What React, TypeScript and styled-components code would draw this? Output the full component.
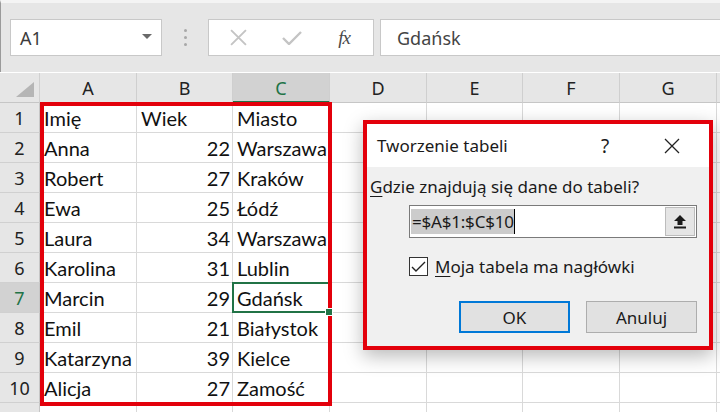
import React from "react";
import styled, { createGlobalStyle } from "styled-components";

const GlobalStyle = createGlobalStyle`
  html, body { margin: 0; padding: 0; background: #ffffff; overflow: hidden; }
  * { box-sizing: border-box; }
`;

const COLS = ["A", "B", "C", "D", "E", "F", "G", ""];
const WIDTHS = [97, 96, 97, 97, 96, 97, 97, 60];

const DATA: [string, string, string][] = [
  ["Imię", "Wiek", "Miasto"],
  ["Anna", "22", "Warszawa"],
  ["Robert", "27", "Kraków"],
  ["Ewa", "25", "Łódź"],
  ["Laura", "34", "Warszawa"],
  ["Karolina", "31", "Lublin"],
  ["Marcin", "29", "Gdańsk"],
  ["Emil", "21", "Białystok"],
  ["Katarzyna", "39", "Kielce"],
  ["Alicja", "27", "Zamość"],
  ["", "", ""],
];

const Root = styled.div`
  position: relative;
  width: 720px;
  height: 412px;
  overflow: hidden;
  background: #ffffff;
`;

const FormulaBar = styled.div`
  height: 72px;
  background: #e6e6e6;
  border-top: 3px solid #f4f4f4;
  border-left: 1px solid #9a9a9a;
  display: flex;
  align-items: flex-start;
  padding: 16px 0 0 9px;
`;

const NameBox = styled.div`
  width: 152px;
  height: 37px;
  background: #ffffff;
  border: 1px solid #c8c8c8;
  display: flex;
  align-items: center;
  justify-content: space-between;
  padding: 0 9px 0 9px;
  font-family: "Noto Sans", "Open Sans", sans-serif;
  font-size: 18px;
  color: #3c3c3c;
`;

const DropArrow = styled.span`
  width: 0;
  height: 0;
  border-left: 5px solid transparent;
  border-right: 5px solid transparent;
  border-top: 5px solid #6a6a6a;
  margin-top: -2px;
`;

const Dots = styled.div`
  width: 46px;
  height: 37px;
  display: flex;
  flex-direction: column;
  align-items: center;
  justify-content: center;
  gap: 4px;
  & > span {
    width: 3px;
    height: 3px;
    border-radius: 50%;
    background: #a8a8a8;
  }
`;

const ButtonsBox = styled.div`
  width: 166px;
  height: 37px;
  background: #ffffff;
  border: 1px solid #c8c8c8;
  display: flex;
  align-items: center;
  padding-left: 20px;
`;

const IconSlot = styled.div<{ $w: number }>`
  width: ${(p) => p.$w}px;
  display: flex;
  align-items: center;
  justify-content: center;
`;

const Fx = styled.span`
  font-family: "Liberation Serif", "DejaVu Serif", serif;
  font-style: italic;
  font-size: 19px;
  color: #4a4a4a;
  letter-spacing: -1px;
`;

const FormulaInput = styled.div`
  flex: 1;
  margin-left: 6px;
  height: 37px;
  background: #ffffff;
  border: 1px solid #c8c8c8;
  border-right: none;
  display: flex;
  align-items: center;
  padding-left: 16px;
  font-family: "Noto Sans", "Open Sans", sans-serif;
  font-size: 18px;
  color: #444444;
`;

const Sheet = styled.div`
  display: grid;
  grid-template-columns: 40px ${WIDTHS.map((w) => w + "px").join(" ")};
  grid-auto-rows: 30px;
  padding-top: 1px;
`;

const Corner = styled.div`
  background: #e6e6e6;
  border-right: 1px solid #d0d0d0;
  border-bottom: 1px solid #c6c6c6;
  display: flex;
  align-items: flex-end;
  justify-content: flex-end;
  padding: 0 5px 5px 0;
`;

const ColHeader = styled.div<{ $active?: boolean }>`
  background: ${(p) => (p.$active ? "#d2d2d2" : "#e6e6e6")};
  border-right: 1px solid #cfcfcf;
  border-bottom: ${(p) => (p.$active ? "2px solid #217346" : "1px solid #c6c6c6")};
  display: flex;
  align-items: center;
  justify-content: center;
  font-family: "Noto Sans", "Open Sans", sans-serif;
  font-size: 18px;
  color: ${(p) => (p.$active ? "#217346" : "#222222")};
  padding-top: ${(p) => (p.$active ? "1px" : "0")};
`;

const RowHeader = styled.div<{ $active?: boolean }>`
  background: ${(p) => (p.$active ? "#d2d2d2" : "#e6e6e6")};
  border-right: 1px solid #c6c6c6;
  border-bottom: 1px solid #d0d0d0;
  display: flex;
  align-items: center;
  justify-content: center;
  font-family: "Noto Sans", "Open Sans", sans-serif;
  font-size: 18px;
  color: ${(p) => (p.$active ? "#217346" : "#222222")};
`;

const Cell = styled.div<{ $align?: "left" | "right"; $selected?: boolean }>`
  position: relative;
  border-right: 1px solid #d9d9d9;
  border-bottom: 1px solid #d9d9d9;
  display: flex;
  align-items: center;
  justify-content: ${(p) => (p.$align === "right" ? "flex-end" : "flex-start")};
  padding: 0 2px 0 4px;
  font-family: Lato, "Noto Sans", sans-serif;
  font-size: 20px;
  color: #111111;
  white-space: nowrap;
  ${(p) =>
    p.$selected &&
    `
    &::after {
      content: "";
      position: absolute;
      left: -1px; top: -1px; right: -1px; bottom: -1px;
      border: 2px solid #217346;
    }
    &::before {
      content: "";
      position: absolute;
      right: -4px; bottom: -4px;
      width: 6px; height: 6px;
      background: #217346;
      border: 1px solid #ffffff;
      z-index: 2;
    }
  `}
`;

const RangeFrame = styled.div`
  position: absolute;
  left: 40px;
  top: 102px;
  width: 292px;
  height: 304px;
  border: 4px solid #e3000b;
  pointer-events: none;
`;

const Dialog = styled.div`
  position: absolute;
  left: 363px;
  top: 120px;
  width: 350px;
  height: 230px;
  border: 4px solid #e3000b;
  background: #f0f0f0;
  box-shadow: 0 6px 18px rgba(0, 0, 0, 0.28);
  display: flex;
  flex-direction: column;
  font-family: "Noto Sans", "Open Sans", sans-serif;
  color: #1a1a1a;
`;

const TitleBar = styled.div`
  height: 43px;
  background: #ffffff;
  display: flex;
  align-items: center;
  padding: 0 0 0 10px;
  font-size: 17px;
`;

const Title = styled.span`
  flex: 1;
`;

const TitleButton = styled.span<{ $w: number }>`
  width: ${(p) => p.$w}px;
  display: flex;
  align-items: center;
  justify-content: center;
  font-size: 19px;
`;

const Body = styled.div`
  flex: 1;
  display: flex;
  flex-direction: column;
  padding: 8px 12px 0 3px;
  font-size: 17px;
`;

const Prompt = styled.div`
  line-height: 24px;
`;

const Accel = styled.span`
  text-decoration: underline;
  text-underline-offset: 3px;
  text-decoration-thickness: 1px;
`;

const RefInput = styled.div`
  margin: 6px 0 0 39px;
  height: 33px;
  background: #ffffff;
  border: 1px solid #7a7a7a;
  display: flex;
  align-items: center;
  padding: 0 1px 0 1px;
`;

const RefText = styled.span`
  background: #cccccc;
  height: 25px;
  display: flex;
  align-items: center;
  padding: 0 0 0 1px;
  font-size: 17px;
  letter-spacing: -0.2px;
  border-right: 1px solid #000;
`;

const Spacer = styled.span`
  flex: 1;
`;

const CollapseButton = styled.span`
  width: 30px;
  height: 29px;
  background: #e5e5e5;
  border: 1px solid #bcbcbc;
  display: flex;
  align-items: center;
  justify-content: center;
`;

const CheckRow = styled.label`
  margin: 17px 0 0 39px;
  display: flex;
  align-items: center;
  gap: 7px;
  font-size: 17px;
`;

const CheckBox = styled.span`
  width: 19px;
  height: 19px;
  border: 1px solid #333333;
  background: #ffffff;
  display: flex;
  align-items: center;
  justify-content: center;
`;

const Buttons = styled.div`
  margin-top: auto;
  margin-bottom: 13px;
  display: flex;
  justify-content: flex-end;
  gap: 16px;
`;

const Button = styled.button<{ $default?: boolean }>`
  width: 111px;
  height: 32px;
  background: #e1e1e1;
  border: ${(p) => (p.$default ? "2px solid #0078d7" : "1px solid #adadad")};
  font-family: "Noto Sans", "Open Sans", sans-serif;
  font-size: 17px;
  color: #1a1a1a;
  padding: 0;
`;

function XIcon({ color, size, stroke }: { color: string; size: number; stroke: number }) {
  return (
    <svg width={size} height={size} viewBox="0 0 16 16">
      <path d="M1 1 L15 15 M15 1 L1 15" stroke={color} strokeWidth={stroke} fill="none" />
    </svg>
  );
}

function CheckIcon({ color }: { color: string }) {
  return (
    <svg width="20" height="14" viewBox="0 0 20 14">
      <path d="M1 7 L7 13 L19 1" stroke={color} strokeWidth="2.4" fill="none" />
    </svg>
  );
}

function Triangle() {
  return (
    <svg width="18" height="15" viewBox="0 0 18 15">
      <path d="M18 0 L18 15 L0 15 Z" fill="#b5b5b5" />
    </svg>
  );
}

function UpArrow() {
  return (
    <svg width="14" height="15" viewBox="0 0 14 15">
      <path d="M7 1 L13 7 L9.5 7 L9.5 11 L4.5 11 L4.5 7 L1 7 Z" fill="#1a1a1a" />
      <rect x="1" y="12.5" width="12" height="2" fill="#1a1a1a" />
    </svg>
  );
}

function SmallCheck() {
  return (
    <svg width="15" height="12" viewBox="0 0 15 12">
      <path d="M1 6 L5 10 L14 1" stroke="#222" strokeWidth="1.4" fill="none" />
    </svg>
  );
}

export default function App() {
  const selectedRow = 7;
  return (
    <Root>
      <GlobalStyle />
      <FormulaBar>
        <NameBox>
          A1
          <DropArrow />
        </NameBox>
        <Dots>
          <span />
          <span />
          <span />
        </Dots>
        <ButtonsBox>
          <IconSlot $w={18}>
            <XIcon color="#c4c4c4" size={17} stroke={1.8} />
          </IconSlot>
          <IconSlot $w={90}>
            <CheckIcon color="#c4c4c4" />
          </IconSlot>
          <IconSlot $w={14}>
            <Fx>fx</Fx>
          </IconSlot>
        </ButtonsBox>
        <FormulaInput>Gdańsk</FormulaInput>
      </FormulaBar>
      <Sheet>
        <Corner>
          <Triangle />
        </Corner>
        {COLS.map((c, i) => (
          <ColHeader key={i} $active={c === "C"}>
            {c}
          </ColHeader>
        ))}
        {DATA.map((row, i) => {
          const r = i + 1;
          return (
            <React.Fragment key={r}>
              <RowHeader $active={r === selectedRow}>{r <= 10 ? r : ""}</RowHeader>
              <Cell>{row[0]}</Cell>
              <Cell $align={i === 0 ? "left" : "right"}>{row[1]}</Cell>
              <Cell $selected={r === selectedRow}>{row[2]}</Cell>
              {COLS.slice(3).map((c, j) => (
                <Cell key={j} />
              ))}
            </React.Fragment>
          );
        })}
      </Sheet>
      <RangeFrame />
      <Dialog>
        <TitleBar>
          <Title>Tworzenie tabeli</Title>
          <TitleButton $w={60}>?</TitleButton>
          <TitleButton $w={74}>
            <XIcon color="#222" size={16} stroke={1.3} />
          </TitleButton>
        </TitleBar>
        <Body>
          <Prompt>
            <Accel>G</Accel>dzie znajdują się dane do tabeli?
          </Prompt>
          <RefInput>
            <RefText>=$A$1:$C$10</RefText>
            <Spacer />
            <CollapseButton>
              <UpArrow />
            </CollapseButton>
          </RefInput>
          <CheckRow>
            <CheckBox>
              <SmallCheck />
            </CheckBox>
            <span>
              <Accel>M</Accel>oja tabela ma nagłówki
            </span>
          </CheckRow>
          <Buttons>
            <Button $default>OK</Button>
            <Button>Anuluj</Button>
          </Buttons>
        </Body>
      </Dialog>
    </Root>
  );
}
